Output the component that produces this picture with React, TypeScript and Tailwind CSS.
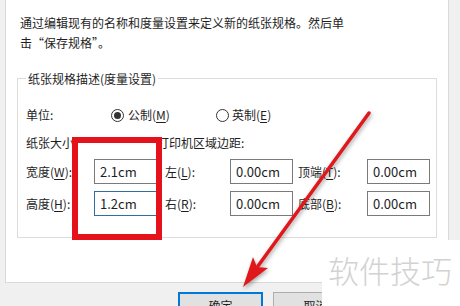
import React from "react";

function Radio({ checked }: { checked?: boolean }) {
  return (
    <span className="flex h-[13px] w-[13px] shrink-0 items-center justify-center rounded-full border border-[#333333] bg-white">
      {checked ? <span className="h-[7px] w-[7px] rounded-full bg-[#333333]" /> : null}
    </span>
  );
}

function Field({ value, focused }: { value: string; focused?: boolean }) {
  return (
    <div
      className={
        "flex h-[25px] items-center bg-white pl-[5px] text-[13px] " +
        (focused ? "border border-[#2f6f9f]" : "border border-[#7a7a7a]")
      }
    >
      {value}
    </div>
  );
}

function Label({ text, k, pl }: { text: string; k: string; pl?: string }) {
  return (
    <div className={"flex h-[25px] items-center " + (pl ?? "")}>
      {text}(<u className="underline-offset-2">{k}</u>):
    </div>
  );
}

export default function App() {
  return (
    <div className="relative h-[306px] w-[460px] overflow-hidden bg-[#f0f0f0] font-['Noto_Sans_CJK_SC',sans-serif] text-[12px] text-[#1e1e1e]">
      <div className="flex h-[283px]">
        <div className="w-[5px]" />
        <div className="w-[444px] border-b border-l border-r border-[#d9d9d9] bg-white pl-[11px] pt-[13px]">
          <p className="pl-[3px] leading-[20px]">
            通过编辑现有的名称和度量设置来定义新的纸张规格。然后单
            <br />
            击“保存规格”。
          </p>
          <div className="mt-[25px] h-[160px] w-[420px] border border-[#dcdcdc]">
            <div className="-mt-[10px] flex h-[20px]">
              <span className="ml-[8px] bg-white px-[2px] leading-[20px]">纸张规格描述(度量设置)</span>
            </div>
            <div className="mt-[16px] flex h-[20px] items-center pl-[8px]">
              <span className="w-[85px]">单位:</span>
              <div className="flex w-[105px] items-center gap-[4px]">
                <Radio checked />
                <span>
                  公制(<u className="underline-offset-2">M</u>)
                </span>
              </div>
              <div className="flex items-center gap-[3px]">
                <Radio />
                <span>
                  英制(<u className="underline-offset-2">E</u>)
                </span>
              </div>
            </div>
            <div className="mt-[8px] flex h-[20px] items-center pl-[8px]">
              <span className="w-[131px]">纸张大小</span>
              <span>打印机区域边距:</span>
            </div>
            <div className="mt-[6px] grid grid-cols-[68px_63px_73px_63px_74px_63px] pl-[8px]">
              <Label text="宽度" k="W" />
              <Field value="2.1cm" />
              <Label text="左" k="L" pl="pl-[8px]" />
              <Field value="0.00cm" />
              <Label text="顶端" k="T" pl="pl-[5px]" />
              <Field value="0.00cm" />
            </div>
            <div className="mt-[7px] grid grid-cols-[68px_63px_73px_63px_74px_63px] pl-[8px]">
              <Label text="高度" k="H" />
              <Field value="1.2cm" focused />
              <Label text="右" k="R" pl="pl-[8px]" />
              <Field value="0.00cm" />
              <Label text="底部" k="B" pl="pl-[5px]" />
              <Field value="0.00cm" />
            </div>
          </div>
        </div>
      </div>
      <div className="flex gap-[10px] pl-[178px] pt-[9px]">
        <div className="flex h-[28px] w-[85px] items-center justify-center border-2 border-[#0078d7] bg-[#e1e1e1]">
          确定
        </div>
        <div className="flex h-[28px] w-[85px] items-center justify-center border border-[#adadad] bg-[#e1e1e1]">
          取消
        </div>
      </div>

      {/* annotation: red rectangle */}
      <div className="absolute left-[72px] top-[137px] h-[103px] w-[90px] border-[6px] border-[#e5121b]" />

      {/* annotation: red arrow */}
      <svg
        className="pointer-events-none absolute left-0 top-0 drop-shadow-[1px_2px_2px_rgba(0,0,0,0.35)]"
        width="460"
        height="306"
        viewBox="0 0 460 306"
      >
        <line x1="369" y1="113" x2="258" y2="266" stroke="#e0181c" strokeWidth="3.5" strokeLinecap="round" />
        <polygon points="243,287 268,268 257,267 253,257" fill="#e0181c" />
      </svg>

      {/* watermark */}
      <div className="absolute left-[322px] top-[240px] h-[66px] w-[138px] bg-white pl-[6px] pt-[12px] text-[31px] font-light leading-[36px] text-[#d2d2d2]">
        软件技巧
      </div>
    </div>
  );
}
